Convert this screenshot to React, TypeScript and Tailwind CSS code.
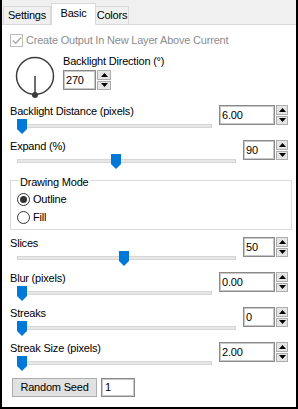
import React from 'react';

function Arrows({ w = 'w-[12px]' }: { w?: string }) {
  return (
    <div className={`flex h-[20px] ${w} flex-col gap-[1px]`}>
      <div className="flex flex-1 items-center justify-center border border-[#adadad] bg-[#e5e5e5]">
        <svg width="7" height="4" viewBox="0 0 7 4">
          <path d="M0 4L3.5 0L7 4Z" fill="#000" />
        </svg>
      </div>
      <div className="flex flex-1 items-center justify-center border border-[#adadad] bg-[#e5e5e5]">
        <svg width="7" height="4" viewBox="0 0 7 4">
          <path d="M0 0L3.5 4L7 0Z" fill="#000" />
        </svg>
      </div>
    </div>
  );
}

function Spin({ value, wide }: { value: string; wide?: boolean }) {
  return (
    <div className="flex items-start gap-[1px]">
      <div
        className={`flex h-[20px] ${wide ? 'w-[56px]' : 'w-[32px]'} items-center border border-[#8a8a8a] bg-white pl-[2px] shadow-[inset_0_0_0_1px_#c8c8c8]`}
      >
        {value}
      </div>
      <Arrows />
    </div>
  );
}

function SliderRow({ label, value, wide, offset }: { label: string; value: string; wide?: boolean; offset: number }) {
  return (
    <div className="flex h-[35px] items-start pl-[8px] pr-[8px]">
      <div className="flex flex-1 flex-col">
        <div className="h-[15px]">{label}</div>
        <div className="relative ml-[7px] mr-[7px] h-[15px]">
          <div className="mt-[5px] h-[4px] border border-[#d6d6d6] bg-[#e7e7e7]" />
          <svg className="absolute top-0" style={{ left: offset }} width="10" height="15" viewBox="0 0 10 15">
            <path d="M0 0H10V10L5 15L0 10Z" fill="#0078d7" />
          </svg>
        </div>
      </div>
      <div className="mt-[1px]">
        <Spin value={value} wide={wide} />
      </div>
    </div>
  );
}

function Radio({ label, checked }: { label: string; checked?: boolean }) {
  return (
    <div className="flex h-[18px] items-center gap-[3px]">
      <div className="flex h-[13px] w-[13px] items-center justify-center rounded-full border border-[#333] bg-white">
        {checked && <div className="h-[7px] w-[7px] rounded-full bg-[#333]" />}
      </div>
      <span>{label}</span>
    </div>
  );
}

export default function App() {
  return (
    <div className="flex h-[409px] w-[298px] flex-col border-x-2 border-b-2 border-black bg-white font-['Liberation_Sans',Arial,sans-serif] text-[11px] leading-[15px] tracking-[-0.2px] text-black">
      {/* Tabs */}
      <div className="flex h-[24px] items-end bg-[#f0f0f0] pl-px">
        <div className="flex h-[18px] w-[48px] items-center justify-center border border-b-0 border-[#d9d9d9] bg-[#f0f0f0]">
          Settings
        </div>
        <div className="relative z-10 -mb-px flex h-[22px] w-[45px] items-start justify-center border border-b-0 border-[#d9d9d9] bg-white pt-[2px]">
          Basic
        </div>
        <div className="flex h-[18px] w-[33px] items-center justify-center border border-b-0 border-l-0 border-[#d9d9d9] bg-[#f0f0f0]">
          Colors
        </div>
      </div>

      <div className="flex flex-1 flex-col border-t border-[#d9d9d9]">
        {/* Checkbox */}
        <div className="mt-[8px] flex h-[15px] items-center gap-[3px] pl-[8px] text-[#8d8d8d]">
          <div className="flex h-[13px] w-[13px] items-center justify-center border border-[#bcbcbc] bg-white">
            <svg width="10" height="9" viewBox="0 0 10 9">
              <path d="M1 4.5L3.8 7.3L9 1.5" stroke="#a8a8a8" strokeWidth="1.4" fill="none" />
            </svg>
          </div>
          <span>Create Output In New Layer Above Current</span>
        </div>

        {/* Dial */}
        <div className="mt-[6px] flex items-start gap-[8px] pl-[13px]">
          <svg className="mt-[2px]" width="40" height="44" viewBox="0 0 40 44">
            <circle cx="20" cy="20" r="18.5" stroke="#3c3c3c" strokeWidth="1.5" fill="none" />
            <line x1="20" y1="20" x2="20" y2="38" stroke="#3c3c3c" strokeWidth="1.5" />
            <circle cx="20" cy="39" r="3" fill="#3c3c3c" />
          </svg>
          <div className="flex flex-col">
            <div className="h-[15px]">Backlight Direction (°)</div>
            <div className="mt-[1px] flex items-start gap-[1px]">
              <div className="flex h-[20px] w-[33px] items-center border border-[#8a8a8a] bg-white pl-[2px] shadow-[inset_0_0_0_1px_#c8c8c8]">
                270
              </div>
              <Arrows w="w-[14px]" />
            </div>
          </div>
        </div>

        <div className="mt-[4px]">
          <SliderRow label="Backlight Distance (pixels)" value="6.00" wide offset={0} />
          <SliderRow label="Expand (%)" value="90" offset={94} />
        </div>

        {/* Drawing Mode */}
        <div className="relative ml-[8px] mr-[4px] mt-[6px] border border-[#dcdcdc] pb-[3px] pl-[6px] pt-[9px]">
          <span className="absolute left-[8px] top-[-6px] bg-white px-px">Drawing Mode</span>
          <Radio label="Outline" checked />
          <Radio label="Fill" />
        </div>

        <div className="mt-[6px]">
          <SliderRow label="Slices" value="50" offset={102} />
          <SliderRow label="Blur (pixels)" value="0.00" wide offset={0} />
          <SliderRow label="Streaks" value="0" offset={0} />
          <SliderRow label="Streak Size (pixels)" value="2.00" wide offset={0} />
        </div>

        <div className="mt-[2px] flex items-center gap-[4px] pl-[10px]">
          <button className="flex h-[19px] w-[85px] items-center justify-center border border-[#adadad] bg-[#e1e1e1]">
            Random Seed
          </button>
          <div className="flex h-[19px] w-[34px] items-center border border-[#8a8a8a] bg-white pl-[3px] shadow-[inset_0_0_0_1px_#c8c8c8]">
            1
          </div>
        </div>
      </div>
    </div>
  );
}
